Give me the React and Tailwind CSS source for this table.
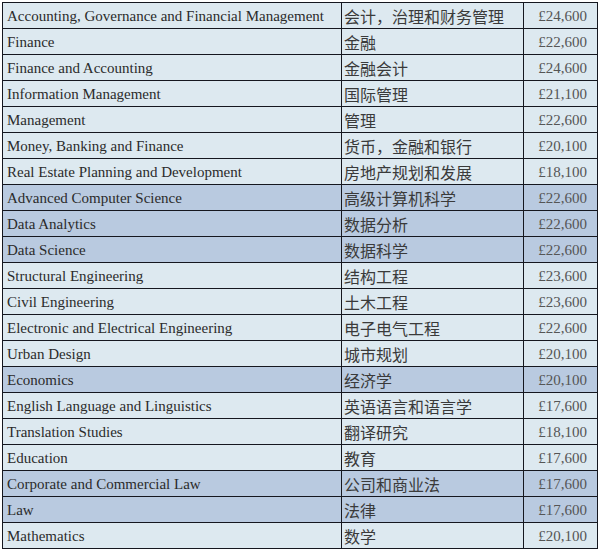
const rows = [
  ['Accounting, Governance and Financial Management', '会计，治理和财务管理', '£24,600', false],
  ['Finance', '金融', '£22,600', false],
  ['Finance and Accounting', '金融会计', '£24,600', false],
  ['Information Management', '国际管理', '£21,100', false],
  ['Management', '管理', '£22,600', false],
  ['Money, Banking and Finance', '货币，金融和银行', '£20,100', false],
  ['Real Estate Planning and Development', '房地产规划和发展', '£18,100', false],
  ['Advanced Computer Science', '高级计算机科学', '£22,600', true],
  ['Data Analytics', '数据分析', '£22,600', true],
  ['Data Science', '数据科学', '£22,600', true],
  ['Structural Engineering', '结构工程', '£23,600', false],
  ['Civil Engineering', '土木工程', '£23,600', false],
  ['Electronic and Electrical Engineering', '电子电气工程', '£22,600', false],
  ['Urban Design', '城市规划', '£20,100', false],
  ['Economics', '经济学', '£20,100', true],
  ['English Language and Linguistics', '英语语言和语言学', '£17,600', false],
  ['Translation Studies', '翻译研究', '£18,100', false],
  ['Education', '教育', '£17,600', false],
  ['Corporate and Commercial Law', '公司和商业法', '£17,600', true],
  ['Law', '法律', '£17,600', true],
  ['Mathematics', '数学', '£20,100', false],
]

export default function App() {
  return (
    <div className="h-[552px] w-[598px] bg-white pl-[2px] pt-[2px]">
      <table className="w-[595px] table-fixed border-collapse font-['Liberation_Serif',serif]">
        <colgroup>
          <col className="w-[339px]" />
          <col className="w-[182px]" />
          <col className="w-[74px]" />
        </colgroup>
        <tbody>
          {rows.map(([en, zh, fee, hl]) => (
            <tr key={en} className={`h-[26px] ${hl ? 'bg-[#b9cae0]' : 'bg-[#dde9f0]'}`}>
              <td className="border border-[#15171f] pl-[4px] pt-[2px] text-[15px] leading-none text-[#2b2b2b]">{en}</td>
              <td className="border border-[#15171f] pl-[2px] font-['Noto_Sans_CJK_SC',sans-serif] text-[16px] leading-none text-[#3a3a3a]">{zh}</td>
              <td className="border border-[#15171f] pr-[10px] pt-[2px] text-right text-[15px] leading-none text-[#555]">{fee}</td>
            </tr>
          ))}
        </tbody>
      </table>
    </div>
  )
}
